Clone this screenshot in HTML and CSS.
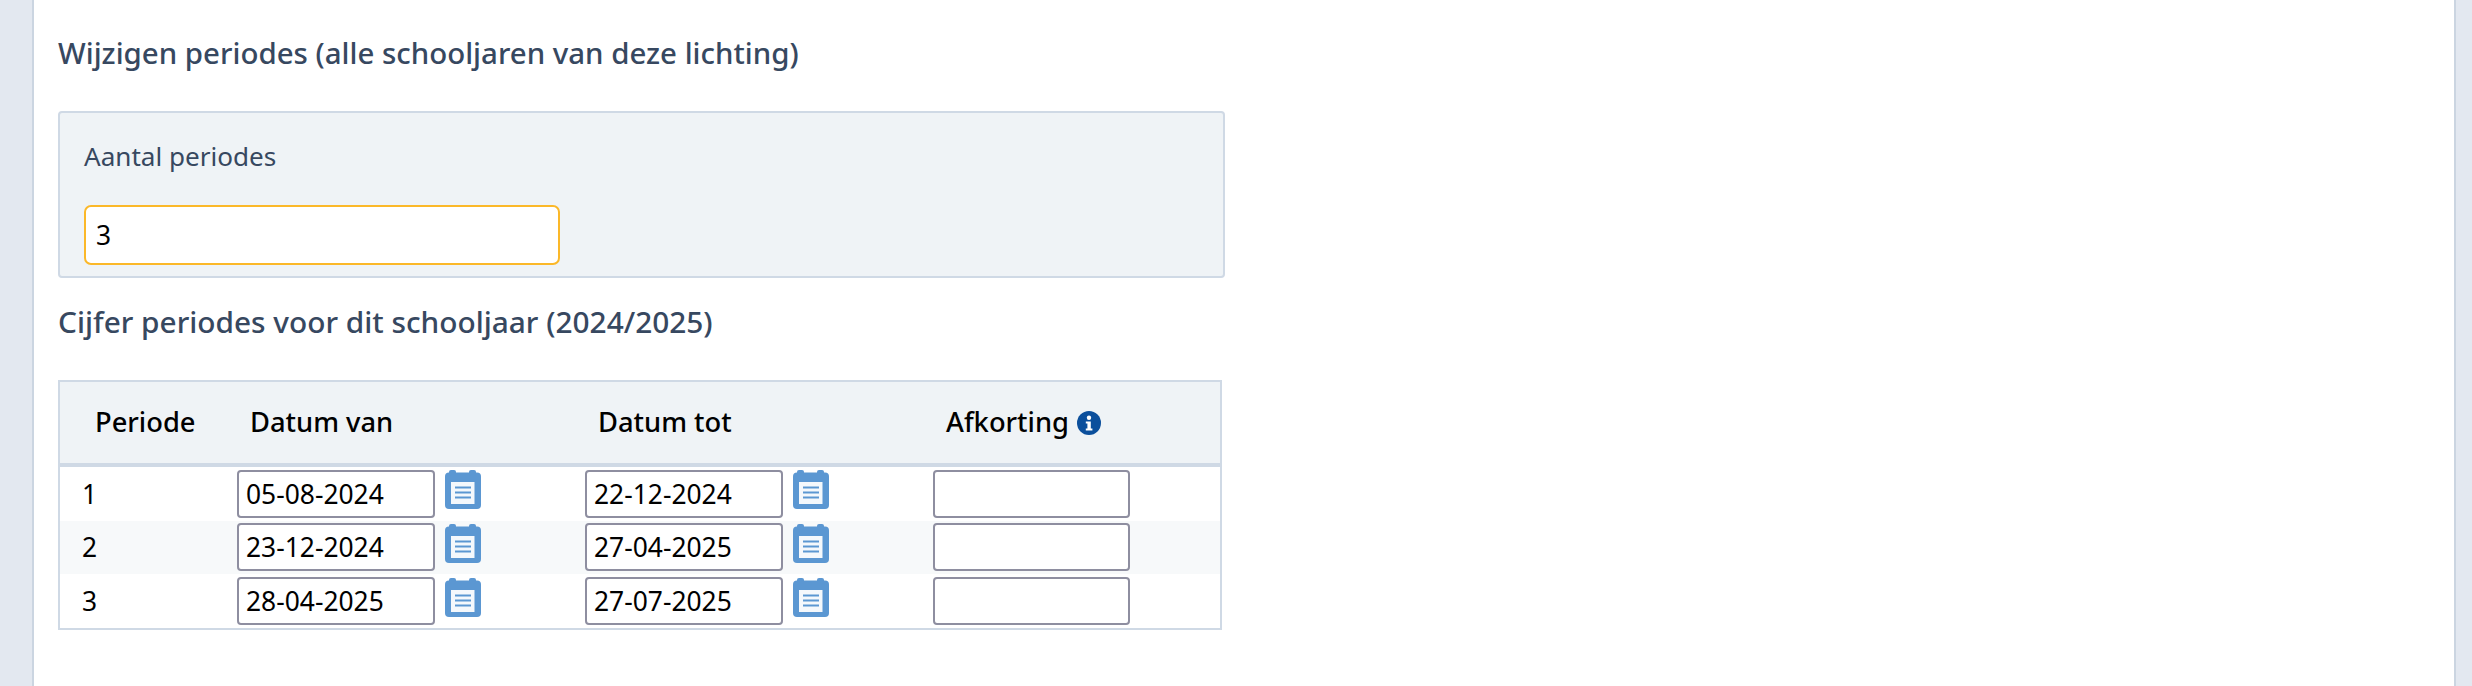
FILE: index.html
```html
<!DOCTYPE html>
<html lang="nl">
<head>
    <meta charset="UTF-8">
    <meta name="viewport" content="width=device-width, initial-scale=1.0">
    <title>Wijzigen periodes</title>
    <link rel="stylesheet" href="styles.css">
</head>
<body>
    <svg class="icon-defs" width="0" height="0" aria-hidden="true">
        <symbol id="calendar" viewBox="0 0 36 39">
            <rect x="0" y="2.5" width="36" height="36.5" rx="4" fill="#5b97d2"/>
            <rect x="4" y="0" width="7" height="6" rx="2" fill="#5b97d2"/>
            <rect x="24" y="0" width="7" height="6" rx="2" fill="#5b97d2"/>
            <rect x="6" y="12" width="23.5" height="22" fill="#f4f8fc"/>
            <rect x="10" y="16.5" width="16" height="2" fill="#5b97d2"/>
            <rect x="10" y="21.5" width="16" height="2" fill="#5b97d2"/>
            <rect x="10" y="26.5" width="16" height="2" fill="#5b97d2"/>
        </symbol>
    </svg>

    <div class="page">
        <div class="rail rail-left"></div>

        <main class="content">
            <h2 class="title">Wijzigen periodes (alle schooljaren van deze lichting)</h2>

            <div class="panel">
                <label class="panel-label" for="aantal">Aantal periodes</label>
                <input class="panel-input" id="aantal" type="text" value="3">
            </div>

            <h2 class="title title-second">Cijfer periodes voor dit schooljaar (2024/2025)</h2>

            <table class="periods">
                <colgroup>
                    <col class="col-nr">
                    <col class="col-date">
                    <col class="col-date">
                    <col class="col-short">
                </colgroup>
                <thead>
                    <tr>
                        <th class="th-nr">Periode</th>
                        <th>Datum van</th>
                        <th>Datum tot</th>
                        <th>
                            Afkorting
                            <svg class="info" viewBox="0 0 24 24" aria-hidden="true">
                                <circle cx="12" cy="12" r="12" fill="#0b4f9c"/>
                                <circle cx="12" cy="6.8" r="2.2" fill="#fff"/>
                                <path d="M8.8 10.4h5v7h1.6v2.2H8.8v-2.2h1.6v-4.8H8.8z" fill="#fff"/>
                            </svg>
                        </th>
                    </tr>
                </thead>
                <tbody>
                    <tr>
                        <td class="td-nr">1</td>
                        <td><input class="cell-input" type="text" value="05-08-2024"><svg class="cal"><use href="#calendar"/></svg></td>
                        <td><input class="cell-input" type="text" value="22-12-2024"><svg class="cal"><use href="#calendar"/></svg></td>
                        <td><input class="cell-input" type="text"></td>
                    </tr>
                    <tr>
                        <td class="td-nr">2</td>
                        <td><input class="cell-input" type="text" value="23-12-2024"><svg class="cal"><use href="#calendar"/></svg></td>
                        <td><input class="cell-input" type="text" value="27-04-2025"><svg class="cal"><use href="#calendar"/></svg></td>
                        <td><input class="cell-input" type="text"></td>
                    </tr>
                    <tr>
                        <td class="td-nr">3</td>
                        <td><input class="cell-input" type="text" value="28-04-2025"><svg class="cal"><use href="#calendar"/></svg></td>
                        <td><input class="cell-input" type="text" value="27-07-2025"><svg class="cal"><use href="#calendar"/></svg></td>
                        <td><input class="cell-input" type="text"></td>
                    </tr>
                </tbody>
            </table>
        </main>

        <div class="rail rail-right"></div>
    </div>
</body>
</html>
```

FILE: styles.css
```css
* {
    box-sizing: border-box;
}

html, body {
    height: 100%;
}

body {
    margin: 0;
    font-family: "Noto Sans", "Open Sans", sans-serif;
    background-color: #fff;
    color: #000;
    overflow: hidden;
}

.icon-defs {
    position: absolute;
}

.page {
    display: flex;
    height: 686px;
}

.rail {
    background-color: #e3e8f0;
    border: 0 solid #cbd5e1;
}

.rail-left {
    width: 34px;
    border-right-width: 2px;
}

.rail-right {
    width: 18px;
    border-left-width: 2px;
}

.content {
    flex: 1;
    padding: 0 0 0 24px;
}

.title {
    margin: 34px 0 0;
    font-size: 29.45px;
    line-height: 38px;
    font-weight: 500;
    color: #374860;
}

.title-second {
    margin-top: 25px;
    font-size: 29.8px;
}

.panel {
    width: 1167px;
    height: 167px;
    margin-top: 39px;
    padding: 25px 24px 0;
    background-color: #eff3f6;
    border: 2px solid #cfd9e5;
    border-radius: 4px;
}

.panel-label {
    display: block;
    font-size: 26.1px;
    line-height: 36px;
    color: #374860;
}

.panel-input {
    display: block;
    width: 476px;
    height: 60px;
    margin-top: 31px;
    padding: 0 10px;
    font: inherit;
    font-size: 26.4px;
    color: #000;
    background-color: #fff;
    border: 2px solid #fbb829;
    border-radius: 7px;
    outline: none;
}

.periods {
    width: 1164px;
    margin-top: 39px;
    table-layout: fixed;
    border-collapse: separate;
    border-spacing: 0;
    border: 2px solid #cfd9e5;
    font-size: 26.4px;
}

.col-nr {
    width: 169px;
}

.col-date {
    width: 348px;
}

.periods th {
    height: 85px;
    padding: 0 0 3px 21px;
    text-align: left;
    font-weight: 500;
    font-size: 27.3px;
    background-color: #eff3f6;
    border-bottom: 4px solid #cfd9e5;
}

.periods .th-nr {
    padding-left: 35px;
}

.periods td {
    height: 53.67px;
    padding: 0 0 0 8px;
    white-space: nowrap;
    vertical-align: middle;
}

.periods .td-nr {
    padding-left: 22px;
}

.periods tbody tr:nth-child(even) td {
    background-color: #f7f9fa;
}

.cell-input {
    width: 198px;
    height: 48px;
    padding: 0 7px;
    font: inherit;
    color: #000;
    background-color: #fff;
    border: 2px solid #8e8ea0;
    border-radius: 4px;
    vertical-align: middle;
}

.periods td:last-child .cell-input {
    width: 197px;
}

.cal {
    width: 36px;
    height: 39px;
    margin-left: 10px;
    vertical-align: middle;
    position: relative;
    top: -4px;
}

.info {
    width: 24px;
    height: 24px;
    margin-left: 1px;
    vertical-align: -3px;
}
```
